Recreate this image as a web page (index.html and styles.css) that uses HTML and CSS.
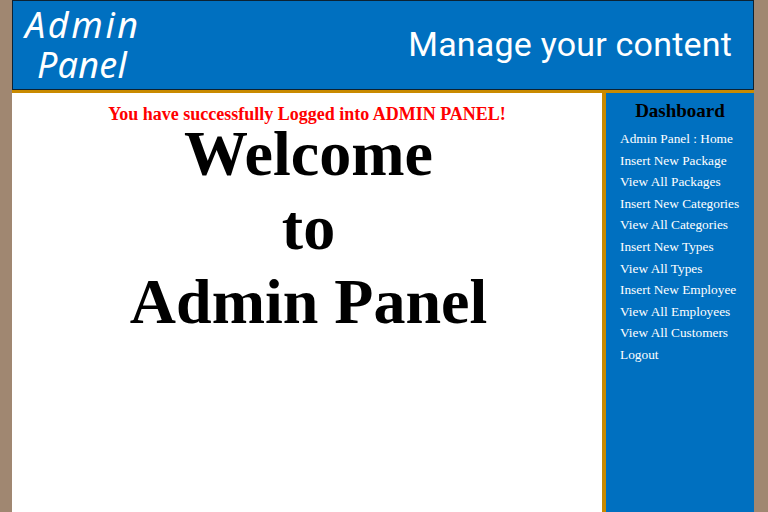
FILE: index.html
```html
<!DOCTYPE html>
<html lang="en">
<head>
<meta charset="utf-8">
<title>Admin Panel</title>
<link rel="stylesheet" href="styles.css">
</head>
<body>
<div class="wrapper">
  <header class="header">
    <div class="logo"><span class="logo-line logo-first">Admin</span><span class="logo-line logo-indent">Panel</span></div>
    <h1 class="tagline">Manage your content</h1>
  </header>
  <div class="content">
    <main class="main">
      <h2 class="notice">You have successfully Logged into ADMIN PANEL!</h2>
      <h1 class="welcome">Welcome<br>to<br>Admin Panel</h1>
    </main>
    <aside class="sidebar">
      <h2 class="side-title">Dashboard</h2>
      <ul class="side-list">
        <li><a href="#">Admin Panel : Home</a></li>
        <li><a href="#">Insert New Package</a></li>
        <li><a href="#">View All Packages</a></li>
        <li><a href="#">Insert New Categories</a></li>
        <li><a href="#">View All Categories</a></li>
        <li><a href="#">Insert New Types</a></li>
        <li><a href="#">View All Types</a></li>
        <li><a href="#">Insert New Employee</a></li>
        <li><a href="#">View All Employees</a></li>
        <li><a href="#">View All Customers</a></li>
        <li><a href="#">Logout</a></li>
      </ul>
    </aside>
  </div>
</div>
</body>
</html>
```
FILE: styles.css
```css
html, body {
  margin: 0;
  padding: 0;
  height: 100%;
  overflow: hidden;
}
body {
  background: #a08771;
  font-family: "Liberation Serif", serif;
}
.wrapper {
  width: 742px;
  height: 512px;
  margin-left: 12px;
  display: flex;
  flex-direction: column;
}
.header {
  box-sizing: border-box;
  height: 90px;
  flex: none;
  background: #0070c0;
  border: 1px solid #0c2233;
  display: flex;
  justify-content: space-between;
  align-items: center;
  color: #fff;
}
.logo {
  font-family: "Noto Sans", sans-serif;
  font-style: italic;
  font-weight: 400;
  font-size: 36px;
  line-height: 40px;
  padding-left: 12px;
  display: flex;
  flex-direction: column;
}
.logo-first {
  letter-spacing: 2.6px;
}
.logo-indent {
  padding-left: 12px;
  letter-spacing: 0.2px;
}
.tagline {
  margin: 0 21px 3px 0;
  font-family: "Roboto", sans-serif;
  font-weight: 400;
  font-size: 34px;
  line-height: 40px;
  letter-spacing: 0.2px;
}
.content {
  flex: 1;
  display: flex;
  border-top: 3px solid #c98a00;
  min-height: 0;
}
.main {
  flex: 1;
  background: #fff;
  text-align: center;
  padding-top: 10px;
}
.notice {
  margin: 0;
  color: #f00;
  font-size: 18px;
  line-height: 22px;
  font-weight: bold;
}
.welcome {
  margin: -8px 0 0;
  padding-left: 3px;
  font-size: 64px;
  line-height: 74px;
  font-weight: bold;
  color: #000;
}
.sidebar {
  box-sizing: border-box;
  width: 152px;
  flex: none;
  background: #0070c0;
  border-left: 4px solid #c98a00;
  padding-top: 7px;
}
.side-title {
  margin: 0;
  text-align: center;
  font-size: 19px;
  line-height: 22px;
  font-weight: bold;
  color: #000;
}
.side-list {
  list-style: none;
  margin: 6px 0 0;
  padding: 0 0 0 14px;
}
.side-list li {
  height: 21.6px;
  line-height: 21.6px;
  font-size: 13.33px;
  white-space: nowrap;
}
.side-list a {
  color: #fff;
  text-decoration: none;
}
```
